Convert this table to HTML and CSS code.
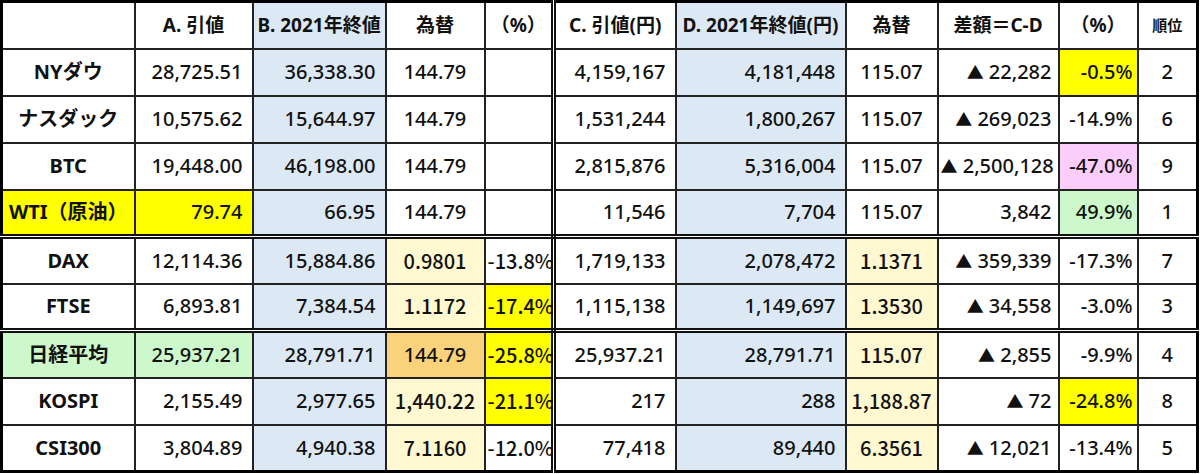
FILE: index.html
```html
<!DOCTYPE html>
<html lang="ja">
<head>
<meta charset="utf-8">
<title>指数比較</title>
<link rel="stylesheet" href="styles.css">
</head>
<body>
<table class="grid">
  <colgroup>
    <col class="w-name"><col class="w-a"><col class="w-b"><col class="w-fx"><col class="w-pc">
    <col class="w-c"><col class="w-d"><col class="w-fx2"><col class="w-diff"><col class="w-pc2"><col class="w-rank">
  </colgroup>
  <thead>
    <tr>
      <th></th>
      <th>A. 引値</th>
      <th class="blue">B. 2021年終値</th>
      <th>為替</th>
      <th class="dbl">（%）</th>
      <th>C. 引値(円)</th>
      <th class="blue">D. 2021年終値(円)</th>
      <th>為替</th>
      <th>差額＝C-D</th>
      <th>（%）</th>
      <th class="rank-h">順位</th>
    </tr>
  </thead>
  <tbody>
    <tr>
      <td class="name">NYダウ</td><td class="r">28,725.51</td><td class="r blue">36,338.30</td><td class="c">144.79</td><td class="dbl"></td>
      <td class="r">4,159,167</td><td class="r blue">4,181,448</td><td class="c">115.07</td><td class="diff"><span class="tri">▲</span> 22,282</td><td class="pc yellow">-0.5%</td><td class="rank">2</td>
    </tr>
    <tr>
      <td class="name">ナスダック</td><td class="r">10,575.62</td><td class="r blue">15,644.97</td><td class="c">144.79</td><td class="dbl"></td>
      <td class="r">1,531,244</td><td class="r blue">1,800,267</td><td class="c">115.07</td><td class="diff"><span class="tri">▲</span> 269,023</td><td class="pc">-14.9%</td><td class="rank">6</td>
    </tr>
    <tr>
      <td class="name">BTC</td><td class="r">19,448.00</td><td class="r blue">46,198.00</td><td class="c">144.79</td><td class="dbl"></td>
      <td class="r">2,815,876</td><td class="r blue">5,316,004</td><td class="c">115.07</td><td class="diff"><span class="tri">▲</span> 2,500,128</td><td class="pc pink">-47.0%</td><td class="rank">9</td>
    </tr>
    <tr class="sep">
      <td class="name yellow">WTI（原油）</td><td class="r yellow">79.74</td><td class="r blue">66.95</td><td class="c">144.79</td><td class="dbl"></td>
      <td class="r">11,546</td><td class="r blue">7,704</td><td class="c">115.07</td><td class="diff">3,842</td><td class="pc green">49.9%</td><td class="rank">1</td>
    </tr>
    <tr>
      <td class="name">DAX</td><td class="r">12,114.36</td><td class="r blue">15,884.86</td><td class="c alt cream">0.9801</td><td class="pc alt dbl">-13.8%</td>
      <td class="r">1,719,133</td><td class="r blue">2,078,472</td><td class="c alt cream">1.1371</td><td class="diff"><span class="tri">▲</span> 359,339</td><td class="pc">-17.3%</td><td class="rank">7</td>
    </tr>
    <tr class="sep">
      <td class="name">FTSE</td><td class="r">6,893.81</td><td class="r blue">7,384.54</td><td class="c alt cream">1.1172</td><td class="pc alt yellow dbl">-17.4%</td>
      <td class="r">1,115,138</td><td class="r blue">1,149,697</td><td class="c alt cream">1.3530</td><td class="diff"><span class="tri">▲</span> 34,558</td><td class="pc">-3.0%</td><td class="rank">3</td>
    </tr>
    <tr>
      <td class="name green">日経平均</td><td class="r green">25,937.21</td><td class="r blue">28,791.71</td><td class="c orange">144.79</td><td class="pc alt yellow dbl">-25.8%</td>
      <td class="r">25,937.21</td><td class="r blue">28,791.71</td><td class="c alt cream">115.07</td><td class="diff"><span class="tri">▲</span> 2,855</td><td class="pc">-9.9%</td><td class="rank">4</td>
    </tr>
    <tr>
      <td class="name">KOSPI</td><td class="r">2,155.49</td><td class="r blue">2,977.65</td><td class="c alt cream">1,440.22</td><td class="pc alt yellow dbl">-21.1%</td>
      <td class="r">217</td><td class="r blue">288</td><td class="c alt cream">1,188.87</td><td class="diff"><span class="tri">▲</span> 72</td><td class="pc yellow">-24.8%</td><td class="rank">8</td>
    </tr>
    <tr>
      <td class="name">CSI300</td><td class="r">3,804.89</td><td class="r blue">4,940.38</td><td class="c alt cream">7.1160</td><td class="pc alt dbl">-12.0%</td>
      <td class="r">77,418</td><td class="r blue">89,440</td><td class="c alt cream">6.3561</td><td class="diff"><span class="tri">▲</span> 12,021</td><td class="pc">-13.4%</td><td class="rank">5</td>
    </tr>
  </tbody>
</table>
</body>
</html>
```

FILE: styles.css
```css
html, body {
  margin: 0;
  padding: 0;
  background: #ffffff;
}

.grid {
  border-collapse: collapse;
  table-layout: fixed;
  width: 1198px;
  border: 3px solid #000;
  font-family: "Noto Sans", "Noto Sans CJK JP", sans-serif;
  font-size: 20px;
  font-weight: 500;
  color: #111;
}

.w-name { width: 133px; }
.w-a { width: 118px; }
.w-b { width: 133px; }
.w-fx { width: 99px; }
.w-pc { width: 69px; }
.w-c { width: 122px; }
.w-d { width: 170px; }
.w-fx2 { width: 92px; }
.w-diff { width: 121px; }
.w-pc2 { width: 79px; }
.w-rank { width: 60px; }

.grid th,
.grid td {
  height: 47px;
  padding: 0 9px;
  border: 2px solid #222;
  white-space: nowrap;
  overflow: hidden;
  box-sizing: border-box;
  line-height: 1;
}

.grid th {
  font-weight: 700;
  font-size: 19px;
  text-align: center;
  padding: 0 4px;
}

.grid th.rank-h {
  font-size: 15px;
}

.grid td.name {
  text-align: center;
  font-weight: 700;
  padding: 0 4px;
}

.grid td.r { text-align: right; }
.grid td.c { text-align: center; padding: 0 2px; }
.grid td.pc { text-align: right; padding: 0 4px 0 2px; }
.grid td.diff { text-align: right; padding: 0 6px 0 2px; }
.grid td.rank { text-align: center; }

.tri {
  font-size: 17px;
}

.grid td.alt {
  font-family: "Noto Sans CJK JP", sans-serif;
  font-weight: 500;
}

.grid .dbl { border-right: 5px double #111; }
.grid tr.sep td { border-bottom: 5px double #111; }

.grid td.rank,
.grid th.rank-h { border-left: 1px solid #777; }

.blue { background: #dce9f5; }
.yellow { background: #ffff00; }
.cream { background: #fff8d0; }
.orange { background: #fbd27c; }
.green { background: #ccf8cc; }
.pink { background: #fbcdfb; }
```
